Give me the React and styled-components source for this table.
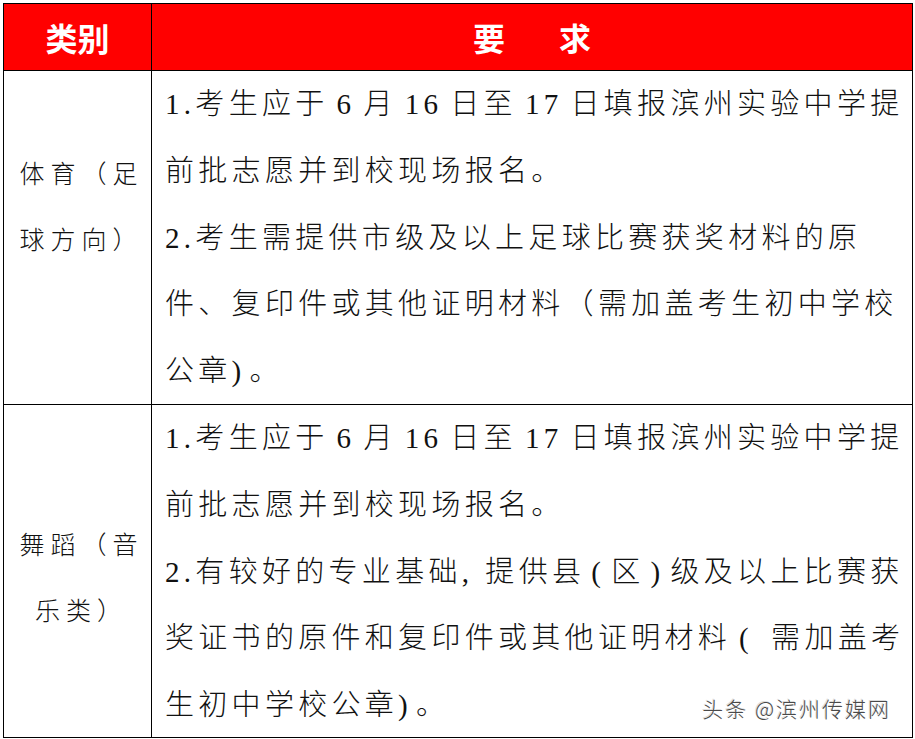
import React from 'react'
import styled, { createGlobalStyle } from 'styled-components'

const GlobalStyle = createGlobalStyle`
  body {
    margin: 0;
    background: #fff;
  }
`

const Page = styled.div`
  padding: 3px 0 0 3px;
`

const Table = styled.div`
  display: grid;
  grid-template-columns: 148px 760px;
  grid-template-rows: 67px 334px 332px;
  width: 910px;
  box-sizing: border-box;
  border: 1px solid #000;
`

const HeadCell = styled.div`
  display: flex;
  align-items: center;
  justify-content: center;
  gap: ${p => (p.$wide ? '54px' : '0')};
  background: #ff0000;
  color: #fff;
  font-family: 'Noto Sans CJK SC', sans-serif;
  font-weight: 700;
  font-size: 32px;
  border-bottom: 1px solid #000;
  border-right: ${p => (p.$first ? '1px solid #000' : 'none')};
`

const TypeCell = styled.div`
  box-sizing: border-box;
  padding: ${p => p.$top}px 6px 0 14px;
  border-right: 1px solid #000;
  border-bottom: ${p => (p.$last ? 'none' : '1px solid #000')};
  font-family: 'Noto Sans CJK SC', sans-serif;
  font-weight: 300;
  font-size: 25px;
  letter-spacing: 6px;
  line-height: 66px;
  text-align: center;
  color: #111;
`

const TypeLine = styled.div`
  white-space: nowrap;
`

const ReqCell = styled.div`
  position: relative;
  box-sizing: border-box;
  padding-left: 13px;
  border-bottom: ${p => (p.$last ? 'none' : '1px solid #000')};
  font-family: 'Liberation Serif', 'Noto Sans CJK SC', serif;
  font-size: 29px;
  font-weight: 300;
  letter-spacing: 4.3px;
  line-height: 66.8px;
  color: #111;
`

const Line = styled.div`
  white-space: nowrap;
`

// latin digits and half-width marks get extra room, as the CJK grid gives them
const Latin = styled.span`
  font-family: 'Liberation Serif', serif;
  padding: 0 ${p => p.$right ?? p.$pad ?? 8}px 0 ${p => p.$left ?? p.$pad ?? 8}px;
`

const Watermark = styled.div`
  position: absolute;
  right: 21px;
  bottom: 17px;
  font-family: 'Noto Sans CJK SC', sans-serif;
  font-size: 21px;
  letter-spacing: 2px;
  line-height: 24px;
  color: #4a4a4a;
  text-shadow: 1px 1px 0 #fff, -1px -1px 0 #ddd;
`

const FirstItem = () => (
  <>
    <Line>
      <Latin $pad={0}>1.</Latin>考生应于<Latin>6</Latin>月<Latin>16</Latin>日至
      <Latin>17</Latin>日填报滨州实验中学提
    </Line>
    <Line>前批志愿并到校现场报名。</Line>
  </>
)

export default function App() {
  return (
    <Page>
      <GlobalStyle />
      <Table>
        <HeadCell $first>类别</HeadCell>
        <HeadCell $wide>
          <span>要</span>
          <span>求</span>
        </HeadCell>

        <TypeCell $top={68}>
          <TypeLine>体育（足</TypeLine>
          <TypeLine>球方向）</TypeLine>
        </TypeCell>
        <ReqCell>
          <FirstItem />
          <Line>
            <Latin $pad={0}>2.</Latin>考生需提供市级及以上足球比赛获奖材料的原
          </Line>
          <Line>件、复印件或其他证明材料（需加盖考生初中学校</Line>
          <Line>
            公章<Latin $left={0} $right={4}>)</Latin>。
          </Line>
        </ReqCell>

        <TypeCell $top={105} $last>
          <TypeLine>舞蹈（音</TypeLine>
          <TypeLine>乐类）</TypeLine>
        </TypeCell>
        <ReqCell $last>
          <FirstItem />
          <Line>
            <Latin $pad={0}>2.</Latin>有较好的专业基础<Latin $left={0} $right={12}>,</Latin>
            提供县<Latin $pad={6}>(</Latin>区<Latin $pad={6}>)</Latin>级及以上比赛获
          </Line>
          <Line>
            奖证书的原件和复印件或其他证明材料<Latin $left={8} $right={18}>(</Latin>需加盖考
          </Line>
          <Line>
            生初中学校公章<Latin $left={0} $right={4}>)</Latin>。
          </Line>
          <Watermark>头条 @滨州传媒网</Watermark>
        </ReqCell>
      </Table>
    </Page>
  )
}
